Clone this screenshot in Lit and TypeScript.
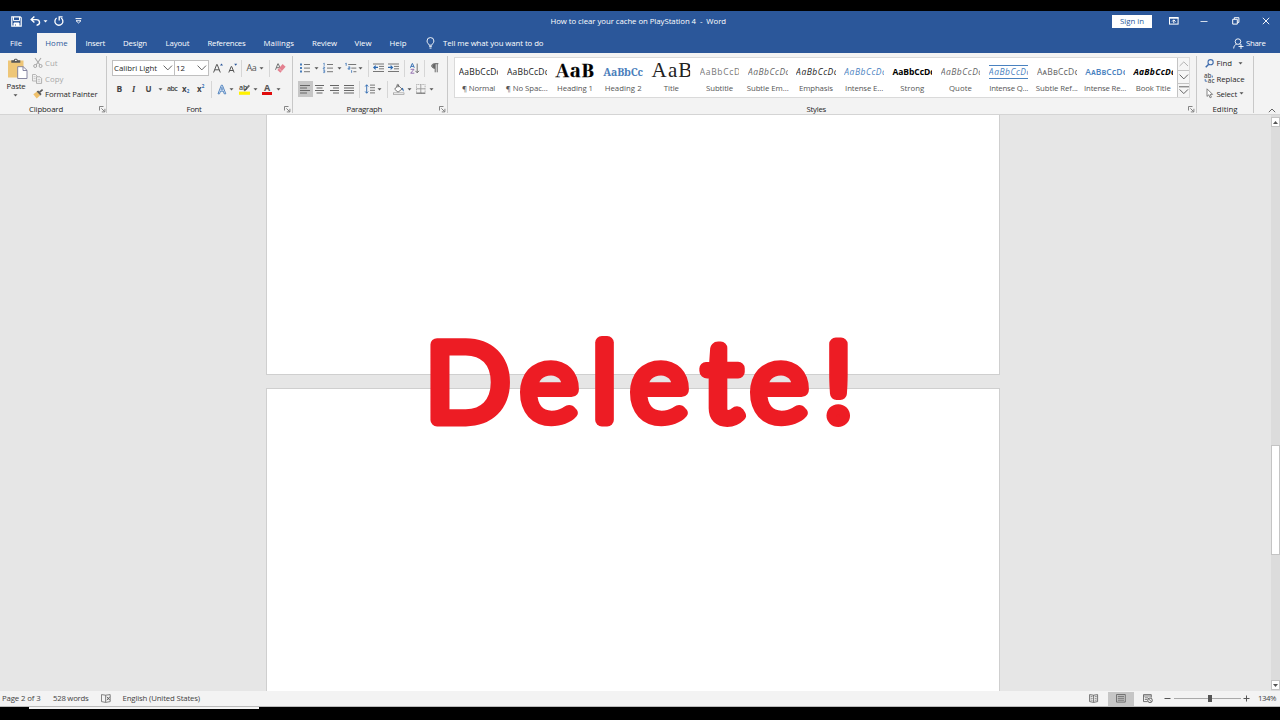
import { LitElement, html, svg, css, nothing } from "lit";
import { customElement, property } from "lit/decorators.js";

/** A line of text whose tracking is tuned so that it fills a given width. */
@customElement("fit-text")
class FitText extends LitElement {
  @property({ type: Number }) w = 0;
  @property() text = "";
  static styles = css`
    :host { display: block; white-space: pre; }
    .s { display: inline-block; }
  `;
  render() {
    return html`<span class="s">${this.text}</span>`;
  }
  updated() {
    const s = this.renderRoot.querySelector(".s") as HTMLElement;
    s.style.letterSpacing = "0px";
    const n = s.getBoundingClientRect().width;
    s.style.letterSpacing = `${(this.w - n) / this.text.length}px`;
  }
}

const lines = (rows: number[][], c = "#666") =>
  rows.map(([x, y, w]) => svg`<rect x=${x} y=${y} width=${w} height="1" fill=${c}></rect>`);

const ICONS: Record<string, [number, number, unknown]> = {
  save: [11, 11, svg`<path d="M.8 .8h8.4l1 1v8.4H.8z" fill="none" stroke="#fff" stroke-width="1.2"/><path d="M2.5 1v3.6h6V1M3 10V7h5v3" fill="none" stroke="#fff"/><path d="M3 7h5v3H5V8.5H4V10H3z" fill="#fff"/>`],
  undo: [11, 10, svg`<path d="M4.4 .6 1.2 3.6l3.2 3M1.4 3.6h4.8c4.4 0 4.4 5.4.4 5.6" fill="none" stroke="#fff" stroke-width="1.4"/>`],
  redo: [10, 10, svg`<path d="M2.6 2A4 4 0 1 0 7.2 2" fill="none" stroke="#fff" stroke-width="1.3"/><path d="M5.2 4.4V.9h3.4" fill="none" stroke="#fff" stroke-width="1.3"/>`],
  qat: [7, 6, svg`<path d="M.5 .6h6" stroke="#fff"/><path d="M1 2.7 3.5 5 6 2.7z" fill="none" stroke="#fff" stroke-width=".9"/>`],
  ribbonopt: [10, 8, svg`<rect x=".5" y=".5" width="8.6" height="6.6" fill="none" stroke="#fff"/><path d="M.5 1.2h9" stroke="#fff"/><path d="M4.8 6.2V3M3 4.6 4.8 2.8l1.8 1.8" fill="none" stroke="#fff"/>`],
  min: [8, 8, svg`<path d="M.5 4.5h7" stroke="#fff" stroke-width=".8"/>`],
  restore: [8, 8, svg`<path d="M.7 2.3h4.6v4.8H.7z" fill="none" stroke="#fff"/><path d="M2.3 2.1V.7h4.6v4.7H5.5" fill="none" stroke="#fff"/>`],
  close: [8, 8, svg`<path d="M.8 .8 7.2 7.2M7.2 .8.8 7.2" stroke="#fff" stroke-width=".95"/>`],
  bulb: [9, 12, svg`<path d="M3 8.2C3 6.8 1 6.2 1 4a3.4 3.4 0 0 1 6.9 0c0 2.2-2 2.8-2 4.2zM3.2 9.6h2.6M3.5 11.1h2" fill="none" stroke="#fff" stroke-width=".9"/>`],
  share: [11, 11, svg`<circle cx="5" cy="3.6" r="2.8" fill="none" stroke="#fff" stroke-width=".9"/><path d="M.7 10.5c0-2.4 1.2-3.8 2.9-4.2M6.6 6.2l1 .6M8 6v5M5.5 8.5h5" fill="none" stroke="#fff" stroke-width=".9"/>`],
  paste: [20, 22, svg`<rect x="0" y="2.5" width="15.5" height="17" fill="#eec678"/><path d="M3.3 2.2h2.6C6 .3 9.6.3 9.7 2.2h2.6v2.6h-9z" fill="#595959"/><rect x="7" y="1.8" width="1.7" height="1.2" fill="#f3f3f3"/><path d="M9.7 8.7h5.5l3.8 3.6v8.2H9.7z" fill="#fff" stroke="#7b7b98" stroke-width=".9"/><path d="M15 8.7v3.8h4" fill="none" stroke="#7b7b98" stroke-width=".9"/>`],
  cut: [10, 10, svg`<path d="M2 0 7 7M8 0 3 7" stroke="#a8a8a8" stroke-width="1.1"/><circle cx="2.2" cy="8" r="1.5" fill="none" stroke="#a8a8a8"/><circle cx="7.6" cy="8" r="1.5" fill="none" stroke="#a8a8a8"/>`],
  copy: [10, 10, svg`<path d="M.5 .5h3l1.6 1.6V7H.5z" fill="#f3f3f3" stroke="#b0b0b0" stroke-width=".9"/><path d="M4.5 2.8H8L9.6 4.4v5H4.5z" fill="#f3f3f3" stroke="#a8a8a8" stroke-width=".9"/><path d="M5.7 5.4h2.5M5.7 7.2h2.5M1.6 2.7h2M1.6 4.6h2" stroke="#b4b4b4" stroke-width=".7"/>`],
  painter: [11, 10, svg`<path d="M.3 5.2 4 2.6l3.3 3.6-3.6 3.2z" fill="#efc06a"/><path d="M3.6 2.4 5.2 1.4 8.6 5 7.4 6.4z" fill="#5a5a5a"/><path d="M6.6 3.2 9.6.6" stroke="#5a5a5a" stroke-width="1.7"/>`],
  grow: [11, 10, svg`<path d="M.6 9.5 3.7 1.5h.5l3.1 8M1.8 6.8h4.4" fill="none" stroke="#555"/><path d="M7 2.4 8.5.5 10 2.4z" fill="#2b579a"/>`],
  shrink: [10, 10, svg`<path d="M.8 9.5 3.2 3.5h.5l2.4 6M1.6 7.5h3.6" fill="none" stroke="#555"/><path d="M6.2.8 7.7 2.7 9.2.8z" fill="#2b579a"/>`],
  eraser: [11, 10, svg`<path d="M.5 6.8 2.8.8h.5L5 5M1.4 4.7h3" fill="none" stroke="#666" stroke-width=".9"/><path d="m7.6 1 3 2.8-5.2 6-3-2.8z" fill="#e3808f"/><path d="m4.2 5.6 2.6 2.6" stroke="#f6d5da" stroke-width=".7"/>`],
  fx: [10, 11, svg`<path d="M1 9.8 4.3 1.2h1.1l3.4 8.6H7.2L6.3 7.2H3.5l-1 2.6z" fill="#dfeaf8" stroke="#4a7ebb" stroke-width=".9"/><path d="m4 5.8.9-2.6.9 2.6z" fill="#f3f3f3" stroke="#4a7ebb" stroke-width=".7"/>`],
  mark: [12, 12, svg`<rect x="0" y="8.6" width="11" height="3.2" fill="#fff100"/><path d="M4.5 8 9.6 1.8 11 3 6 8.2z" fill="#707070"/><text x="0" y="6.8" font-size="7" fill="#444" font-family="Open Sans" font-weight="600">ab</text>`],
  bullets: [11, 10, svg`<path d="M0 .4h2v2H0zM0 4h2v2H0zM0 7.6h2v2H0z" fill="#4a7ebb"/>${lines([[4, 1, 6], [4, 4.6, 6], [4, 8.2, 6]], "#777")}`],
  nums: [11, 10, svg`<path d="M1.2 0v2.8M.4.5l.8-.4M.2 4h1.4v1H.3v1h1.6M.2 7.2h1.5v2.4H.2M.5 8.4h1.2" fill="none" stroke="#4a7ebb" stroke-width=".8"/>${lines([[4, 1, 6], [4, 4.6, 6], [4, 8.2, 6]], "#777")}`],
  multi: [12, 10, svg`<path d="M1.2 0v2.8M.4.5l.8-.4M3.4 3.8h1.4v2.4H3.2V5h1.6M6.6 7.2v2.6" fill="none" stroke="#4a7ebb" stroke-width=".9"/>${lines([[3.2, 1, 8], [6.3, 4.6, 5], [8.4, 8.2, 3]], "#777")}`],
  outdent: [12, 10, svg`${lines([[0, .5, 11], [6, 2.9, 5], [6, 5.3, 5], [0, 8, 11]], "#777")}<path d="M5 4.4H1M2.7 2.6.8 4.4l1.9 1.9" fill="none" stroke="#2b68b0" stroke-width="1.1"/>`],
  indent: [12, 10, svg`${lines([[0, .5, 11], [6, 2.9, 5], [6, 5.3, 5], [0, 8, 11]], "#777")}<path d="M0 4.4h4M2.6 2.6l1.9 1.8-1.9 1.9" fill="none" stroke="#2b68b0" stroke-width="1.1"/>`],
  sort: [10, 11, svg`<path d="M.4 4.8 2.2.5h.3l1.8 4.3M1 3.4h2.7" fill="none" stroke="#2b68b0" stroke-width=".9"/><path d="M.6 6.3h3.4L.7 10.2h3.6" fill="none" stroke="#8a62a8" stroke-width=".9"/><path d="M7.2.6v9M5.4 7.8l1.8 2L9 7.8" fill="none" stroke="#666" stroke-width=".9"/>`],
  pil: [8, 10, svg`<path d="M4 5.3C-.4 5.3-.4.7 3.6.7H7.4M4.2.7v8.6M6.2.7v8.6" fill="none" stroke="#666" stroke-width="1"/><path d="M4 5.2C.2 5.2.2.8 4 .8z" fill="#666"/>`],
  left: [10, 9, lines([[0, 0, 10], [0, 2.5, 7], [0, 5, 10], [0, 7.5, 7]])],
  center: [10, 9, lines([[0, 0, 9], [1.5, 2.5, 6], [0, 5, 9], [1.5, 7.5, 6]])],
  right: [10, 9, lines([[0, 0, 9], [3, 2.5, 6], [0, 5, 9], [3, 7.5, 6]])],
  just: [10, 9, lines([[0, 0, 10], [0, 2.5, 10], [0, 5, 10], [0, 7.5, 10]])],
  spacing: [10, 10, svg`<path d="M1.7.8v8.4M.2 2.5 1.7.8l1.5 1.7M.2 7.5l1.5 1.7 1.5-1.7" fill="none" stroke="#2b68b0" stroke-width=".9"/>${lines([[5, .6, 5], [5, 3.2, 5], [5, 5.8, 5], [5, 8.4, 5]], "#777")}`],
  bucket: [12, 11, svg`<path d="m5 1.2 4 3.8-4 3.2-3.3-3z" fill="#fff" stroke="#666" stroke-width=".9"/><path d="M4 3.5V.8c0-.6 1.6-.6 1.6 0v2.4" fill="none" stroke="#666" stroke-width=".8"/><path d="M9 3.8c1.6.4 1.8 2.2 1.5 4L8.8 5z" fill="#2b68b0"/><rect x=".4" y="8.9" width="10.6" height="1.6" fill="#fff" stroke="#888" stroke-width=".6"/>`],
  borders: [10, 10, svg`<path d="M.5.5h8.6v8.6H.5z" fill="none" stroke="#999" stroke-width=".8" stroke-dasharray="1 .7"/><path d="M4.8.5v8.6M.5 4.8h8.6" stroke="#999" stroke-width=".9"/><path d="M.3 9.2h9" stroke="#666"/>`],
  find: [10, 9, svg`<circle cx="5.6" cy="3.2" r="2.6" fill="none" stroke="#3f6cad" stroke-width="1.1"/><path d="M3.7 5.2.7 8.2" stroke="#3f6cad" stroke-width="1.5"/>`],
  replace: [11, 11, svg`<text x="0" y="4.6" font-size="6.2" font-weight="600" fill="#555" font-family="Open Sans">ab</text><text x="3.8" y="10" font-size="6.2" font-weight="600" fill="#555" font-family="Open Sans">ac</text><path d="M1.2 6v2.2h2M8.3 2.6v2" fill="none" stroke="#3f6cad" stroke-width=".9"/>`],
  select: [8, 11, svg`<path d="M1 .8v7.6l1.8-1.6 1.3 3 1.3-.6L4.2 6.4h2.4z" fill="#fff" stroke="#666" stroke-width=".8"/>`],
  launch: [7, 7, svg`<path d="M.5 4.5v-4h4" fill="none" stroke="#777" stroke-width=".9"/><path d="m2.4 2.4 3.2 3.2M5.9 2.8v3.1H2.8" fill="none" stroke="#777" stroke-width=".9"/>`],
  caret: [5, 3, svg`<path d="M.5.3h4L2.5 2.6z" fill="#555"/>`],
  wcaret: [5, 3, svg`<path d="M.5.3h4L2.5 2.6z" fill="#fff"/>`],
  drop: [10, 6, svg`<path d="M.6.6 4.8 4.9 9 .6" fill="none" stroke="#555" stroke-width=".9"/>`],
  up: [10, 6, svg`<path d="M.6 5 4.8.9 9 5" fill="none" stroke="#aaa" stroke-width=".9"/>`],
  more: [10, 9, svg`<path d="M0 .8h10" stroke="#555" stroke-width=".9"/><path d="M.6 3.4 4.8 7.6 9 3.4" fill="none" stroke="#555" stroke-width=".9"/>`],
  collapse: [8, 5, svg`<path d="M.8 4.2 4 1l3.2 3.2" fill="none" stroke="#555" stroke-width=".9"/>`],
  sup: [5, 3, svg`<path d="M0 3h5L2.5 0z" fill="#555"/>`],
  sdn: [5, 3, svg`<path d="M0 0h5L2.5 3z" fill="#555"/>`],
  proof: [11, 9, svg`<path d="M4.6 1.2.5.6v7l4.1.8zM4.6 1.2 9.2.6M4.6 8.4l4.6-.8V.6" fill="none" stroke="#666" stroke-width=".8"/><path d="m5.8 2.8 3 3.4M8.8 2.8l-3 3.4" stroke="#555" stroke-width=".9"/>`],
  read: [10, 9, svg`<path d="M4.6 1.2.6.6v7l4 .8 4-.8v-7zM4.6 1v7.4" fill="none" stroke="#666" stroke-width=".9"/><path d="M1.6 2.4l2 .3M1.6 4.2l2 .3M1.6 6l2 .3M5.8 2.7l2-.3M5.8 4.5l2-.3M5.8 6.3l2-.3" stroke="#777" stroke-width=".8"/>`],
  print: [10, 9, svg`<path d="M.5.5h8.8v7.6H.5z" fill="none" stroke="#6a6a6a" stroke-width=".9"/><path d="M1.8 2.4h6.2M1.8 4.3h6.2M1.8 6.2h6.2" stroke="#6a6a6a" stroke-width=".9"/>`],
  web: [11, 9, svg`<path d="M4.5 7.6h-4v-7h7.8v3" fill="none" stroke="#666" stroke-width=".9"/><path d="M.5 2h7.6M1.8 3.8h3.4M1.8 5.5H4" stroke="#666" stroke-width=".8"/><circle cx="7" cy="6.3" r="2.3" fill="#f3f3f3" stroke="#555" stroke-width=".9"/><path d="m5.4 4.8 3.2 3" stroke="#555" stroke-width=".8"/>`],
  minus: [7, 7, svg`<path d="M.5 3.5h6" stroke="#555"/>`],
  plus: [7, 7, svg`<path d="M.5 3.5h6M3.5.5v6" stroke="#555"/>`],
};

const icon = (n: string) => {
  const [w, h, body] = ICONS[n];
  return html`<svg class="ic" width=${w} height=${h} viewBox="0 0 ${w} ${h}">${body}</svg>`;
};

type Item = [number, number, unknown, string?];

/** Lays items out left to right; each is [start, end, content, class]. */
const lane = (origin: number, items: Item[], cls = "") => {
  let at = origin;
  return html`<div class="lane ${cls}">${items.map(([a, b, c, k]) => {
    const gap = a - at;
    at = b;
    return html`<div class="cell ${k ?? ""}" style="margin-left:${gap}px;width:${b - a}px">${
      typeof c === "string" ? html`<fit-text .w=${b - a} .text=${c}></fit-text>` : c ?? nothing
    }</div>`;
  })}</div>`;
};
const I = (a: number, n: string, k?: string): Item => [a, a + ICONS[n][0], icon(n), k];
const sep = (a: number): Item => [a, a + 1, nothing, "sep"];

const STYLES: [string, string, number, string, number][] = [
  ["AaBbCcDc", "", 42, "¶ Normal", 33],
  ["AaBbCcDc", "", 42, "¶ No Spac...", 42],
  ["AaB", "h1", 39.5, "Heading 1", 36],
  ["AaBbCc", "h2", 39.5, "Heading 2", 37],
  ["AaB", "ti", 42, "Title", 15],
  ["AaBbCcD", "sub", 41, "Subtitle", 27],
  ["AaBbCcDc", "it g", 42, "Subtle Em...", 42],
  ["AaBbCcDc", "it", 42, "Emphasis", 34],
  ["AaBbCcDc", "it b", 42, "Intense E...", 38],
  ["AaBbCcDc", "bo", 42, "Strong", 24],
  ["AaBbCcDc", "it g", 42, "Quote", 23],
  ["AaBbCcDc", "it b rule", 42, "Intense Q...", 39],
  ["AᴀBʙCᴄDᴄ", "g", 42, "Subtle Ref...", 42],
  ["AᴀBʙCᴄDᴄ", "b semi", 42, "Intense Re...", 42],
  ["AaBbCcDc", "it bo", 42, "Book Title", 35],
];

@customElement("app-root")
class AppRoot extends LitElement {
  static styles = css`
    :host { display: block; width: 1280px; height: 720px; overflow: hidden; background: #000;
      font: 7.8px/12px "Open Sans", "Noto Sans", sans-serif; color: #262626; }
    * { box-sizing: border-box; }
    .app { display: flex; flex-direction: column; height: 720px; padding-top: 11px; }
    .ic { display: block; flex: none; overflow: visible; }
    .lane { display: flex; align-items: center; height: 16px; }
    .cell { flex: none; display: flex; align-items: center; white-space: nowrap; }
    .lane.title { height: 20px; background: #2b579a; color: #fff; }
    .lane.tabs { height: 22px; background: #2b579a; color: #fff; padding-top: 2px; }
    .tabs fit-text { margin-top: -1px; }
    .signin { height: 13px; background: #fff; color: #2b579a; justify-content: center; }
    .home { height: 20px; background: #f3f3f3; color: #2b579a; justify-content: center; }
    .ribbon { display: flex; height: 62px; background: #f3f3f3; border-bottom: 1px solid #d4d4d4; padding-top: 3px; }
    .group { flex: none; display: flex; flex-direction: column; height: 57px; border-right: 1px solid #c8c8c8; }
    .g1 { width: 107px; } .g2 { width: 185.5px; } .g3 { width: 155.5px; } .g4 { width: 748.5px; } .g5 { width: 57.5px; }
    .tail { flex: 1; display: flex; align-items: flex-end; justify-content: flex-end; padding: 0 4px 1px 0; }
    .lane.foot { height: 12px; flex: none; }
    .foot .ic { margin-top: 1px; }
    .two { padding-top: 4px; display: flex; flex-direction: column; gap: 5px; height: 47px; flex: none; }
    .three { display: flex; flex-direction: column; height: 47px; flex: none; }
    .three .lane { height: 15.4px; flex: none; padding-bottom: 1px; }
    .clip { display: flex; height: 47px; flex: none; }
    .pastecol { width: 31px; flex: none; padding-top: 2px; }
    .pastecol .lane { height: 12px; padding-bottom: 1px; }
    .pastecol .lane.big { height: 22px; padding: 0; }
    .pastecol .lane.tiny { height: 7px; padding: 0; }
    .off { color: #a8a8a8; }
    .sep { height: 17px; background: #d6d6d6; }
    .box { height: 15.5px; background: #fff; border: 1px solid #c0c0c0; justify-content: space-between; padding: 0 1px; }
    .bold { font-weight: 700; color: #444; font-size: 8.5px; }
    .ital { font: italic 700 8.5px "Liberation Serif", serif; color: #444; }
    .und { font-weight: 700; text-decoration: underline; color: #444; font-size: 8px; }
    .strike { text-decoration: line-through; color: #444; font-size: 7px; font-weight: 600; }
    .xx { font-weight: 700; color: #444; font-size: 8px; }
    .xx small { font-size: 4.5px; color: #2b68b0; line-height: 1; }
    .lo small { margin-top: 5px; } .hi small { margin-bottom: 5px; }
    .aa { color: #555; font-size: 9px; }
    .fcol { justify-content: center; height: 12px; font-weight: 700; font-size: 9px; line-height: 9px; color: #555; border-bottom: 3px solid #e00b0b; }
    .sel { height: 16.5px; background: #c6c6c6; justify-content: center; }
    .gallery { display: flex; margin: 1px 0 0 5.5px; width: 736px; height: 41px; background: #fff; border: 1px solid #dadada; flex: none; }
    .style { width: 48.2px; flex: none; display: flex; flex-direction: column; align-items: center; }
    .pv { width: 39.6px; height: 20px; margin-top: 4px; overflow: hidden; display: flex; align-items: center; font-size: 8.5px; color: #222; }
    .nm { height: 12px; color: #555; }
    .pv.h1 { font: 700 18.5px/20px "Noto Serif Display", "DejaVu Serif", "Liberation Serif", serif; color: #000; overflow: visible; padding-bottom: 5px; -webkit-text-stroke: .35px #000; }
    .pv.h2 { font: 700 10.5px/20px "Noto Serif", "Liberation Serif", serif; color: #4a7ebb; overflow: visible; }
    .pv.ti { font: 21px/20px "Liberation Serif", serif; color: #222; padding-bottom: 4px; overflow: visible; clip-path: inset(-4px 1px -4px -2px); }
    .pv.sub { color: #777; }
    .pv.it { font-style: italic; } .pv.g { color: #666; } .pv.b { color: #4a82c0; }
    .pv.bo { font-weight: 700; color: #000; } .pv.semi { font-weight: 600; }
    .pv.rule { height: 14px; margin: 7px 0 3px; border: solid #4a82c0; border-width: 1px 0; }
    .spin { width: 12px; flex: none; margin-left: auto; display: grid; grid-template-rows: 1fr 1fr 1fr; border-left: 1px solid #c4c4c4; background: #f6f6f6; }
    .spin div { display: grid; place-items: center; border-bottom: 1px solid #c4c4c4; }
    .spin div:last-child { border: 0; }
    .canvas { display: flex; height: 576px; background: #e6e6e6; position: relative; }
    .pages { width: 734px; margin-left: 266px; display: flex; flex-direction: column; gap: 13px; }
    .page { background: #fff; border: 1px solid #cfcfcf; border-top: 0; height: 260px; }
    .page.next { flex: 1; border-top: 1px solid #cfcfcf; border-bottom: 0; }
    .scroll { width: 9px; margin-left: auto; background: #dcdcdc; display: flex; flex-direction: column; padding: 2px 0 1px; }
    .btn { height: 10px; background: #fff; border: 1px solid #c4c4c4; display: grid; place-items: center; }
    .thumb { height: 110px; background: #fff; border: 1px solid #c4c4c4; margin: 318px 0 auto; }
    .word { position: absolute; left: 410px; top: 205px; overflow: visible; }
    .word text { font-family: Lato, "Liberation Sans", sans-serif; font-weight: 300; fill: #ed1c24; stroke: #ed1c24; stroke-width: 12.8px; stroke-linejoin: round; }
    .word .e { stroke-width: 11.6px; }
    .lane.status { height: 16px; background: #f3f3f3; color: #444; border-bottom: 1px solid #bbb; }
    .status fit-text { margin-top: -1px; }
    .view { height: 14px; background: #c6c6c6; }
    .track { height: 1px; background: #aaa; } .knob { height: 7px; background: #555; }
    .under { height: 2px; background: #f3f3f3; width: 230px; margin-left: 29px; }
  `;

  render() {
    return html`<div class="app">
      ${lane(0, [I(11, "save"), I(30, "undo"), I(43, "wcaret"), I(54, "redo"), I(75, "qat"),
        [550.5, 726, "How to clear your cache on PlayStation 4  -  Word"],
        [1112, 1152, html`<fit-text .w=${24} .text=${"Sign in"}></fit-text>`, "signin"],
        I(1169, "ribbonopt"), I(1200, "min"), I(1231.5, "restore"), I(1262, "close")], "title")}
      ${lane(0, [[10, 22, "File"], [37, 76, html`<fit-text .w=${22.5} .text=${"Home"}></fit-text>`, "home"],
        [85.5, 105, "Insert"], [123, 147, "Design"], [165.5, 189.5, "Layout"], [207.5, 245.5, "References"],
        [263.5, 294, "Mailings"], [312, 337, "Review"], [354.5, 371.5, "View"], [389.5, 406.5, "Help"],
        I(425.5, "bulb"), [443, 543.5, "Tell me what you want to do"], I(1233, "share"), [1246, 1265.5, "Share"]], "tabs")}
      <div class="ribbon">
        <div class="group g1">
          <div class="clip">
            <div class="pastecol">
              ${lane(0, [I(8, "paste")], "big")}
              ${lane(0, [[6.5, 25.5, "Paste"]])}
              ${lane(0, [I(13, "caret")], "tiny")}
            </div>
            <div class="three">
              ${lane(31, [I(33, "cut"), [45, 57.5, "Cut"]], "off")}
              ${lane(31, [I(32, "copy"), [45, 63.5, "Copy"]], "off")}
              ${lane(31, [I(33, "painter"), [45, 97.5, "Format Painter"]])}
            </div>
          </div>
          ${lane(0, [[29, 63, "Clipboard"], I(99, "launch")], "foot")}
        </div>
        <div class="group g2">
          <div class="two">
            ${lane(107, [
              [112, 175, html`<fit-text .w=${43} .text=${"Calibri Light"}></fit-text>${icon("drop")}`, "box"],
              [174, 208.5, html`<fit-text .w=${9} .text=${"12"}></fit-text>${icon("drop")}`, "box"],
              I(213, "grow"), I(228, "shrink"), sep(241), [246.5, 256.5, "Aa", "aa"], I(259, "caret"), sep(269), I(275, "eraser")])}
            ${lane(107, [[116.5, 122, "B", "bold"], [132, 136, "I", "ital"], [145.5, 151.5, "U", "und"], I(157.5, "caret"),
              [167, 177, "abc", "strike"], [182, 191, html`x<small>2</small>`, "xx lo"], [197, 206, html`x<small>2</small>`, "xx hi"],
              sep(211), I(217, "fx"), I(229, "caret"), I(238.5, "mark"), I(253, "caret"), [262, 272, html`A`, "fcol"], I(275.5, "caret")])}
          </div>
          ${lane(107, [[186.5, 201.5, "Font"], I(284, "launch")], "foot")}
        </div>
        <div class="group g3">
          <div class="two">
            ${lane(292.5, [I(300, "bullets"), I(313.5, "caret"), I(323, "nums"), I(336.5, "caret"), I(345, "multi"), I(358, "caret"),
              sep(368), I(373, "outdent"), I(388, "indent"), sep(404), I(410, "sort"), sep(424), I(431, "pil")])}
            ${lane(292.5, [[297.5, 312.5, icon("left"), "sel"], I(315, "center"), I(330, "right"), I(344, "just"), sep(359),
              I(365, "spacing"), I(377, "caret"), sep(387), I(393, "bucket"), I(406.5, "caret"), I(416, "borders"), I(429, "caret")])}
          </div>
          ${lane(292.5, [[346.5, 382, "Paragraph"], I(439, "launch")], "foot")}
        </div>
        <div class="group g4">
          <div class="three">
            <div class="gallery">
              ${STYLES.map(([p, c, w, n, nw]) => html`<div class="style">
                <div class="pv ${c}"><fit-text .w=${w} .text=${p}></fit-text></div>
                <div class="nm"><fit-text .w=${nw} .text=${n}></fit-text></div></div>`)}
              <div class="spin"><div>${icon("up")}</div><div>${icon("drop")}</div><div>${icon("more")}</div></div>
            </div>
          </div>
          ${lane(448, [[806.5, 826, "Styles"], I(1188, "launch")], "foot")}
        </div>
        <div class="group g5">
          <div class="three">
            ${lane(1196.5, [I(1204.5, "find"), [1216.5, 1232, "Find"], I(1238, "caret")])}
            ${lane(1196.5, [I(1203.5, "replace"), [1216.5, 1244.5, "Replace"]])}
            ${lane(1196.5, [I(1206, "select"), [1216.5, 1237, "Select"], I(1238.5, "caret")])}
          </div>
          ${lane(1196.5, [[1212.5, 1237.5, "Editing"]], "foot")}
        </div>
        <div class="tail">${icon("collapse")}</div>
      </div>
      <div class="canvas">
        <div class="pages"><div class="page"></div><div class="page next"></div></div>
        <div class="scroll">
          <div class="btn">${icon("sup")}</div><div class="thumb"></div><div class="btn">${icon("sdn")}</div>
        </div>
        <svg class="word" width="460" height="130" viewBox="0 0 460 130">
          <text transform="scale(1.04 1)" y="100.3" x="15 106 175.3 211.7 281.7 327.1 398.3" font-size="106.8">D<tspan class="e">e</tspan>l<tspan class="e">e</tspan>t<tspan class="e">e</tspan>!</text>
        </svg>
      </div>
      ${lane(0, [[2, 40.5, "Page 2 of 3"], [53, 88.5, "528 words"], I(101, "proof"), [122.5, 200, "English (United States)"],
        I(1089, "read"), [1107.5, 1134, icon("print"), "view sel"], I(1143, "web"), I(1164, "minus"),
        [1174, 1208, nothing, "track"], [1208, 1211.5, nothing, "knob"], [1211.5, 1241, nothing, "track"],
        I(1243, "plus"), [1258, 1276, "134%"]], "status")}
      <div class="under"></div>
    </div>`;
  }
}
